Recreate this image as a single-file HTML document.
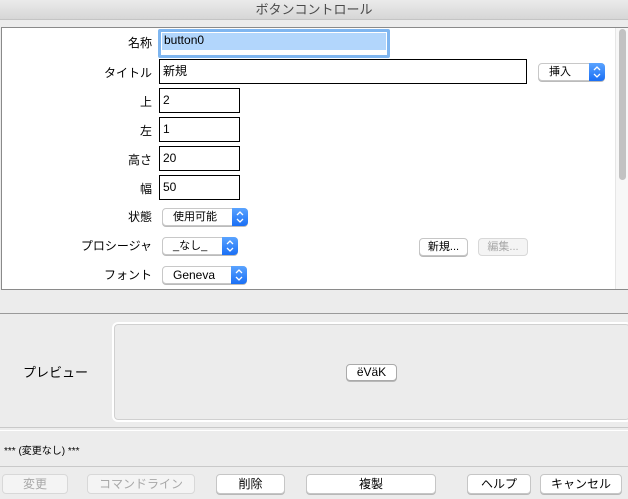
<!DOCTYPE html>
<html><head><meta charset="utf-8"><style>
*{box-sizing:border-box;margin:0;padding:0}
body{width:628px;height:499px;background:#ececec;font-family:"Liberation Sans","Noto Sans CJK JP",sans-serif;font-size:12px;color:#000;position:relative;overflow:hidden}
.a{position:absolute}
.lbl{position:absolute;right:476px;text-align:right;white-space:nowrap;font-size:12px}
.inp{position:absolute;border:1px solid #000;background:#fff;padding:2px 3px;font-size:12px;line-height:18px}
.pop{position:absolute;height:18px;background:#fff;border:1px solid #c8c8c8;border-radius:4px;font-size:11px;line-height:16px;padding-left:10px;box-shadow:0 1px 0 #bbb}
.pop .b{position:absolute;right:-1px;top:-1px;width:16px;height:18px;background:linear-gradient(#5aa3ff,#1a6ff5);border-radius:0 4px 4px 0}
.pop .b svg{position:absolute;left:4px;top:3px}
.btn{position:absolute;height:20px;background:#fff;border:1px solid #c6c6c6;border-radius:4px;text-align:center;font-size:12px;line-height:18px;box-shadow:0 1px 0 #b8b8b8}
.dis{color:#a8a8a8;background:#f4f4f4;border-color:#d8d8d8;box-shadow:none}
</style></head><body>
<div class="a" style="left:0;top:0;width:628px;height:20px;background:linear-gradient(#ebebeb,#d6d6d6);border-bottom:1px solid #c4c4c4;text-align:center;font-size:13px;line-height:20px;color:#4a4a4a">ボタンコントロール</div>
<div class="a" style="left:1px;top:27px;width:627px;height:263px;background:#fff;border:1px solid #8a8a8a;border-right:none"></div>
<div class="a" style="left:615px;top:28px;width:13px;height:261px;background:#f7f7f7;border-left:1px solid #e6e6e6"></div>
<div class="a" style="left:619px;top:29px;width:7px;height:151px;background:#c2c2c2;border-radius:4px"></div>

<div class="lbl" style="top:34px">名称</div>
<div class="a" style="left:158px;top:29px;width:232px;height:29px;border:3px solid #7fb6f0;border-radius:2px;background:#fff"></div>
<div class="a" style="left:162px;top:33px;width:224px;height:17px;background:#b2d6fc;font-size:12px;line-height:14px;padding-left:2px">button0</div>
<div class="lbl" style="top:64px">タイトル</div>
<div class="inp" style="left:159px;top:59px;width:368px;height:25px">新規</div>
<div class="pop" style="left:538px;top:63px;width:67px">挿入<div class="b"><svg width="8" height="12"><path d="M1 4L4 1L7 4M1 8L4 11L7 8" stroke="#fff" stroke-width="1.3" fill="none"/></svg></div></div>
<div class="lbl" style="top:93px">上</div>
<div class="inp" style="left:159px;top:88px;width:81px;height:25px">2</div>
<div class="lbl" style="top:122px">左</div>
<div class="inp" style="left:159px;top:117px;width:81px;height:25px">1</div>
<div class="lbl" style="top:151px">高さ</div>
<div class="inp" style="left:159px;top:146px;width:81px;height:25px">20</div>
<div class="lbl" style="top:180px">幅</div>
<div class="inp" style="left:159px;top:175px;width:81px;height:25px">50</div>
<div class="lbl" style="top:208px">状態</div>
<div class="pop" style="left:162px;top:208px;width:86px">使用可能<div class="b"><svg width="8" height="12"><path d="M1 4L4 1L7 4M1 8L4 11L7 8" stroke="#fff" stroke-width="1.3" fill="none"/></svg></div></div>
<div class="lbl" style="top:237px">プロシージャ</div>
<div class="pop" style="left:162px;top:237px;width:76px">_なし_<div class="b"><svg width="8" height="12"><path d="M1 4L4 1L7 4M1 8L4 11L7 8" stroke="#fff" stroke-width="1.3" fill="none"/></svg></div></div>
<div class="btn" style="left:419px;top:238px;width:49px;height:18px;font-size:11px;line-height:16px">新規...</div>
<div class="btn dis" style="left:478px;top:238px;width:50px;height:18px;font-size:11px;line-height:16px">編集...</div>
<div class="lbl" style="top:266px">フォント</div>
<div class="pop" style="left:162px;top:266px;width:85px;font-size:12px">Geneva<div class="b"><svg width="8" height="12"><path d="M1 4L4 1L7 4M1 8L4 11L7 8" stroke="#fff" stroke-width="1.3" fill="none"/></svg></div></div>

<div class="a" style="left:0;top:313px;width:628px;height:1px;background:#9a9a9a"></div>
<div class="a" style="left:23px;top:362px;font-size:13px">プレビュー</div>
<div class="a" style="left:112px;top:322px;width:520px;height:100px;border:2px solid #fff;border-radius:6px;box-shadow:inset 0 0 0 1px #d0d0d0"></div>
<div class="btn" style="left:346px;top:364px;width:51px;height:17px;font-size:12px;line-height:15px;border-color:#aaa">ëVäK</div>

<div class="a" style="left:0;top:427px;width:628px;height:1px;background:#c9c9c9"></div>
<div class="a" style="left:0;top:430px;width:628px;height:37px;border-top:1px solid #fff;border-bottom:1px solid #c9c9c9"></div>
<div class="a" style="left:4px;top:442px;font-size:10px">*** (変更なし) ***</div>

<div class="btn dis" style="left:2px;top:474px;width:66px">変更</div>
<div class="btn dis" style="left:87px;top:474px;width:108px">コマンドライン</div>
<div class="btn" style="left:216px;top:474px;width:69px">削除</div>
<div class="btn" style="left:306px;top:474px;width:130px">複製</div>
<div class="btn" style="left:467px;top:474px;width:64px">ヘルプ</div>
<div class="btn" style="left:540px;top:474px;width:82px">キャンセル</div>
</body></html>
